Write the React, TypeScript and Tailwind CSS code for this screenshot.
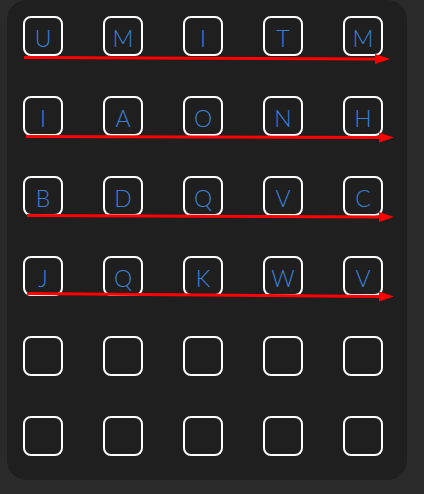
const ROWS: string[][] = [
  ['U', 'M', 'I', 'T', 'M'],
  ['I', 'A', 'O', 'N', 'H'],
  ['B', 'D', 'Q', 'V', 'C'],
  ['J', 'Q', 'K', 'W', 'V'],
  ['', '', '', '', ''],
  ['', '', '', '', ''],
]

// swipe arrows drawn over the board: [x1, y1, tipX, tipY]
const ARROWS: [number, number, number, number][] = [
  [24, 57.5, 390, 59],
  [26, 136.5, 394, 137.5],
  [27, 215.5, 394, 217],
  [27, 293.5, 394, 296.5],
]

function Arrow({ a }: { a: [number, number, number, number] }) {
  const [x1, y1, tx, ty] = a
  const hx = tx - 15
  const hy = y1 + ((ty - y1) * (hx - x1)) / (tx - x1)
  return (
    <g>
      <line x1={x1} y1={y1} x2={hx + 2} y2={hy} stroke="#ff0000" strokeWidth={3} />
      <polygon points={`${hx},${hy - 5} ${tx},${ty} ${hx},${hy + 5}`} fill="#ff0000" />
    </g>
  )
}

export default function App() {
  return (
    <div className="relative w-[424px] h-[494px] bg-[#2a2a2a] overflow-hidden">
      <div className="ml-[7px] w-[400px] h-[480px] rounded-[20px] bg-[#1f1f1f] px-4 pt-4">
        <div className="grid grid-cols-[repeat(5,40px)] gap-10">
          {ROWS.flat().map((ch, i) => (
            <div
              key={i}
              className="w-10 h-10 border-2 border-white rounded-lg flex items-center justify-center pt-[5px] text-[23px] leading-none font-light text-[#3a80d6]"
              style={{ fontFamily: '"Lato", "Noto Sans", sans-serif' }}
            >
              {ch}
            </div>
          ))}
        </div>
      </div>
      <svg className="absolute inset-0 pointer-events-none" width={424} height={494}>
        {ARROWS.map((a, i) => (
          <Arrow key={i} a={a} />
        ))}
      </svg>
    </div>
  )
}
